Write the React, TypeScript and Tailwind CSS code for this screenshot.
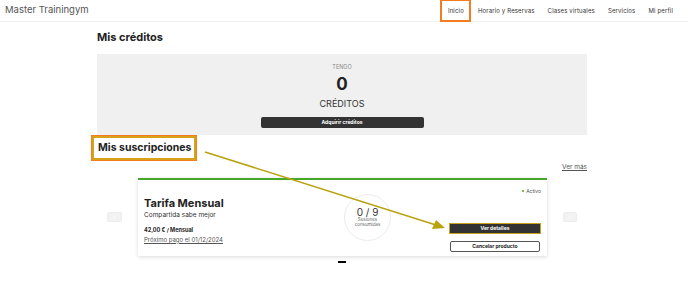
import React from 'react';

const font = { fontFamily: 'Inter, "Open Sans", sans-serif' };

const navItems = ['Inicio', 'Horario y Reservas', 'Clases virtuales', 'Servicios', 'Mi perfil'];

export default function App() {
  return (
    <div className="relative w-[688px] h-[283px] overflow-hidden bg-white text-[#222]" style={font}>
      {/* Header */}
      <header className="flex items-center justify-between h-[22px] pl-[5px] pr-[15px] border-b border-[#f2f2f2]">
        <span className="text-[9.5px] text-[#555]">Master Trainingym</span>
        <nav className="flex items-center gap-[13px] text-[6px] tracking-[0.15px] text-[#333]">
          {navItems.map((item, i) =>
            i === 0 ? (
              <span key={item} className="border-2 border-[#f47c20] pl-[6px] pr-[5px] py-[5px] mr-[-6px]">
                {item}
              </span>
            ) : (
              <span key={item}>{item}</span>
            ),
          )}
        </nav>
      </header>

      <main className="ml-[97px] w-[490px]">
        <h2 className="mt-[10px] text-[11px] font-bold leading-none">Mis créditos</h2>

        {/* Credits box */}
        <section className="mt-[11px] h-[81px] bg-[#f0f0f0] flex flex-col items-center pt-[11px]">
          <span className="text-[5.5px] text-[#888] leading-none">TENGO</span>
          <span className="mt-[5px] text-[17px] font-bold leading-none">0</span>
          <span className="mt-[6px] text-[9px] text-[#333] leading-none">CRÉDITOS</span>
          <button className="mt-[9px] w-[163px] h-[11px] rounded-[2px] bg-[#333] text-white text-[5px] font-bold leading-none">
            Adquirir créditos
          </button>
        </section>

        {/* Subscriptions heading */}
        <div className="flex">
          <span className="ml-[-5px] mt-[1px] inline-flex items-center whitespace-nowrap h-[24px] pl-[4px] pr-[3px] border-2 border-[#d8a31a] outline outline-1 outline-[#f47c20] text-[10.5px] font-bold">
            Mis suscripciones
          </span>
        </div>
        <div className="flex justify-end mt-[3px]">
          <span className="text-[6.5px] text-[#555] underline">Ver más</span>
        </div>
      </main>

      {/* Carousel */}
      <div className="flex items-center mt-[5px] pl-[107px]">
        <button className="w-[15px] h-[10px] rounded-[2px] bg-[#f2f2f2] border border-[#ececec] flex items-center justify-center">
          <span className="text-[6px] text-white leading-none">‹</span>
        </button>
        <div className="ml-[16px] w-[409px] h-[78px] bg-white border-t-2 border-[#46a728] shadow-[0_1px_4px_rgba(0,0,0,0.15)] flex px-[6px]">
          <div className="flex flex-col w-[180px] pt-[18px]">
            <span className="text-[11px] font-bold leading-none">Tarifa Mensual</span>
            <span className="mt-[3px] text-[6.5px] text-[#333] leading-none">Compartida sabe mejor</span>
            <span className="mt-[10px] text-[5.5px] font-bold leading-none">42,00 € / Mensual</span>
            <span className="mt-[3px] text-[6px] text-[#555] underline leading-none">Próximo pago el 01/12/2024</span>
          </div>
          <div className="flex items-start ml-[20px] pt-[14px]">
            <div className="w-[47px] h-[47px] rounded-full border border-[#ececec] flex flex-col items-center justify-center">
              <span className="text-[10px] text-[#333] leading-none">0 / 9</span>
              <span className="text-[4.5px] text-[#666] leading-[5px] text-center">Sesiones<br />consumidas</span>
            </div>
          </div>
          <div className="flex-1 flex flex-col items-end pt-[9px]">
            <span className="flex items-center gap-[2px] text-[5px] text-[#555] leading-none">
              <span className="w-[2px] h-[2px] rounded-full bg-[#46a728]" />
              Activo
            </span>
            <button className="mt-[29px] w-[92px] h-[11px] bg-[#333] border-[1.5px] border-[#c9a21c] text-white text-[5px] font-bold leading-none">
              Ver detalles
            </button>
            <button className="mt-[7px] mr-[1px] w-[90px] h-[11px] rounded-[2px] bg-white border border-[#555] text-[5px] font-bold leading-none">
              Cancelar producto
            </button>
          </div>
        </div>
        <button className="ml-[16px] w-[14px] h-[10px] rounded-[2px] bg-[#f2f2f2] border border-[#ececec] flex items-center justify-center">
          <span className="text-[6px] text-white leading-none">›</span>
        </button>
      </div>
      <div className="flex justify-center mt-[5px] pr-[4px]">
        <span className="w-[8px] h-[2px] bg-black" />
      </div>

      {/* Annotation arrow */}
      <svg className="absolute left-0 top-0 pointer-events-none" width="688" height="283">
        <line x1="205" y1="152" x2="436" y2="225" stroke="#b9a20e" strokeWidth="1.6" />
        <polygon points="445,228 432,229 436,220" fill="#b9a20e" />
      </svg>
    </div>
  );
}
